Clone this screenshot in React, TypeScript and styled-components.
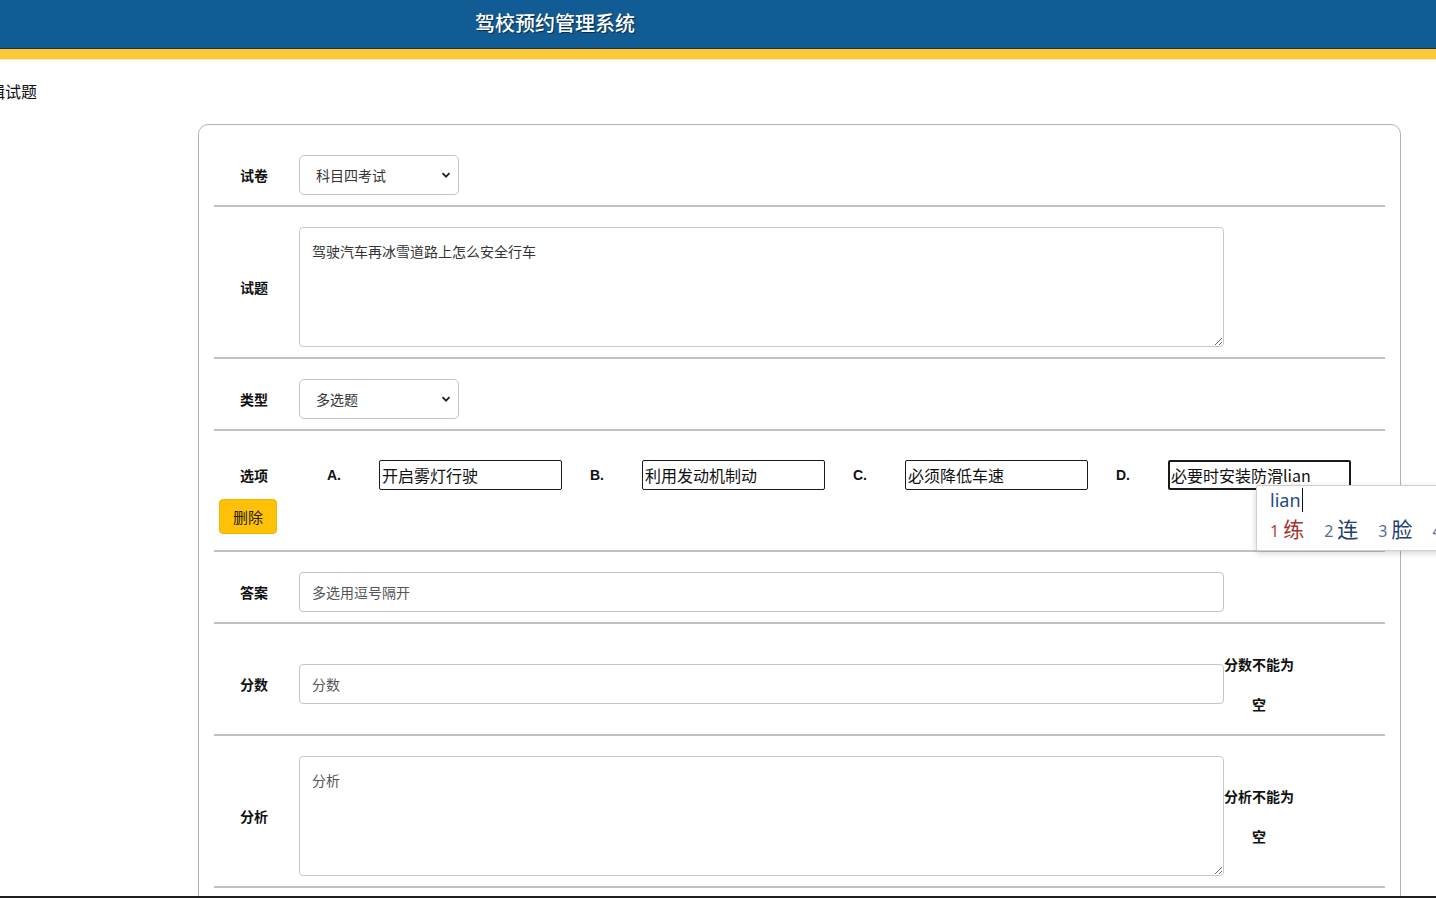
import React from 'react';
import styled, { createGlobalStyle } from 'styled-components';

const GlobalStyle = createGlobalStyle`
  html, body {
    margin: 0;
    padding: 0;
    overflow: hidden;
    background: #fff;
  }
  body {
    font-family: "Noto Sans CJK SC", "Noto Sans", sans-serif;
    color: #111;
  }
  * {
    box-sizing: border-box;
  }
`

const Header = styled.header`
  height: 49px;
  background: #125c96;
  border-bottom: 1px solid #1b3448;
`

const HeaderTitle = styled.h1`
  margin: 0;
  padding-left: 475px;
  line-height: 46px;
  font-size: 20px;
  font-weight: 500;
  color: #fff;
  text-shadow: 1px 1px 1px rgba(0, 0, 0, 0.55);
`

const YellowBar = styled.div`
  height: 11px;
  background: #fcc93b;
  border-bottom: 1px solid #fde9b0;
`

const PageTitle = styled.div`
  margin: 20px 0 22px -27px;
  line-height: 22px;
  font-size: 16px;
  color: #111;
`

const Card = styled.div`
  margin-left: 198px;
  width: 1203px;
  border: 1px solid #b3b3b3;
  border-radius: 10px;
  padding: 10px 15px 0;
  height: 800px;
`

const Row = styled.div<{ $column?: boolean }>`
  display: flex;
  flex-direction: ${props => (props.$column ? 'column' : 'row')};
  align-items: ${props => (props.$column ? 'flex-start' : 'center')};
  padding: 20px 0 10px;
  border-bottom: 2px solid #c2c2c2;
`

const Label = styled.div`
  width: 85px;
  flex: none;
  padding-left: 26px;
  font-size: 14px;
  font-weight: 700;
  color: #111;
`

const SelectWrap = styled.div`
  position: relative;
  width: 160px;
  height: 40px;
`

const Select = styled.select`
  appearance: none;
  width: 100%;
  height: 100%;
  border: 1px solid #c4c4c4;
  border-radius: 5px;
  background: #fff;
  padding: 0 16px;
  font-family: inherit;
  font-size: 14px;
  color: #333;
  outline: none;
`

const Chevron = styled.svg`
  position: absolute;
  right: 8px;
  top: 15px;
  pointer-events: none;
`

const Field = styled.input`
  width: 925px;
  height: 40px;
  border: 1px solid #c4c4c4;
  border-radius: 4px;
  padding: 0 12px;
  font-family: inherit;
  font-size: 14px;
  color: #444;
  outline: none;
  &::placeholder {
    color: #555;
  }
`

const Area = styled.textarea`
  width: 925px;
  height: 120px;
  border: 1px solid #c9c9c9;
  border-radius: 4px;
  padding: 13px 12px;
  font-family: inherit;
  font-size: 14px;
  color: #333;
  outline: none;
  resize: vertical;
  &::placeholder {
    color: #555;
  }
`

const ErrorText = styled.div`
  width: 70px;
  flex: none;
  text-align: center;
  font-size: 14px;
  font-weight: 700;
  line-height: 40px;
  color: #111;
`

const OptionLine = styled.div`
  display: flex;
  align-items: center;
  height: 48px;
`

const Letter = styled.span<{ $first?: boolean }>`
  width: 52px;
  margin-left: ${props => (props.$first ? 28 : 0)}px;
  font-family: "Liberation Sans", Arial, sans-serif;
  font-size: 14px;
  font-weight: 700;
  color: #111;
`

const OptionInput = styled.input<{ $focused?: boolean }>`
  width: 183px;
  height: 30px;
  margin-right: 28px;
  border: ${props => (props.$focused ? 2 : 1)}px solid #1a1a1a;
  border-radius: 2px;
  padding: 0 ${props => (props.$focused ? 1 : 2)}px;
  font-family: inherit;
  font-size: 16px;
  color: #111;
  outline: none;
`

const DeleteButton = styled.button`
  margin: 0 0 6px 5px;
  width: 58px;
  height: 35px;
  border: 1px solid #f0b400;
  border-radius: 4px;
  background: #ffc107;
  font-family: inherit;
  font-size: 15px;
  color: #222;
  padding: 0;
`

const ImePopup = styled.div`
  position: absolute;
  left: 1256px;
  top: 485px;
  width: 200px;
  height: 66px;
  background: #fff;
  border: 1px solid #cfcfcf;
  border-radius: 2px;
  box-shadow: 0 2px 6px rgba(0, 0, 0, 0.18);
  padding: 1px 0 0 13px;
`

const Composition = styled.div`
  font-family: "Noto Sans", sans-serif;
  font-size: 18px;
  line-height: 26px;
  color: #1d4a80;
  span {
    border-right: 1px solid #111;
    padding-right: 1px;
  }
`

const Candidates = styled.div`
  display: flex;
  align-items: baseline;
  gap: 20px;
  margin-top: 1px;
  white-space: nowrap;
`

const Candidate = styled.span<{ $active?: boolean }>`
  font-size: 21px;
  line-height: 28px;
  color: ${props => (props.$active ? '#a3312c' : '#1d3f6e')};
  b {
    font-family: "Noto Sans", sans-serif;
    font-weight: 400;
    font-size: 16px;
    margin-right: 4px;
    color: ${props => (props.$active ? '#b0453d' : '#5a6f8c')};
  }
`

const BottomEdge = styled.div`
  position: fixed;
  left: 0;
  right: 0;
  bottom: 0;
  height: 2px;
  background: #1e1e1e;
`

const options = [
  { letter: 'A.', value: '开启雾灯行驶' },
  { letter: 'B.', value: '利用发动机制动' },
  { letter: 'C.', value: '必须降低车速' },
  { letter: 'D.', value: '必要时安装防滑lian', focused: true },
]

const candidates = ['练', '连', '脸', '']

const ChevronIcon = () => (
  <Chevron width="10" height="10" viewBox="0 0 10 10">
    <path d="M1.5 3.2 L5 6.7 L8.5 3.2" fill="none" stroke="#222" strokeWidth="1.8" />
  </Chevron>
)

const App: React.FC = () => {
  return (
    <>
      <GlobalStyle />
      <Header>
        <HeaderTitle>驾校预约管理系统</HeaderTitle>
      </Header>
      <YellowBar />
      <PageTitle>编辑试题</PageTitle>

      <Card>
        <Row>
          <Label>试卷</Label>
          <SelectWrap>
            <Select defaultValue="4">
              <option value="4">科目四考试</option>
              <option value="1">科目一考试</option>
            </Select>
            <ChevronIcon />
          </SelectWrap>
        </Row>

        <Row>
          <Label>试题</Label>
          <Area defaultValue="驾驶汽车再冰雪道路上怎么安全行车" />
        </Row>

        <Row>
          <Label>类型</Label>
          <SelectWrap>
            <Select defaultValue="multi">
              <option value="multi">多选题</option>
              <option value="single">单选题</option>
            </Select>
            <ChevronIcon />
          </SelectWrap>
        </Row>

        <Row $column>
          <OptionLine>
            <Label>选项</Label>
            {options.map((o, i) => (
              <React.Fragment key={o.letter}>
                <Letter $first={i === 0}>{o.letter}</Letter>
                <OptionInput $focused={o.focused} defaultValue={o.value} />
              </React.Fragment>
            ))}
          </OptionLine>
          <DeleteButton>删除</DeleteButton>
        </Row>

        <Row>
          <Label>答案</Label>
          <Field placeholder="多选用逗号隔开" />
        </Row>

        <Row>
          <Label>分数</Label>
          <Field placeholder="分数" />
          <ErrorText>分数不能为空</ErrorText>
        </Row>

        <Row>
          <Label>分析</Label>
          <Area placeholder="分析" />
          <ErrorText>分析不能为空</ErrorText>
        </Row>
      </Card>

      <ImePopup>
        <Composition>
          <span>lian</span>
        </Composition>
        <Candidates>
          {candidates.map((c, i) => (
            <Candidate key={i} $active={i === 0}>
              <b>{i + 1}</b>
              {c}
            </Candidate>
          ))}
        </Candidates>
      </ImePopup>

      <BottomEdge />
    </>
  )
}

export default App
